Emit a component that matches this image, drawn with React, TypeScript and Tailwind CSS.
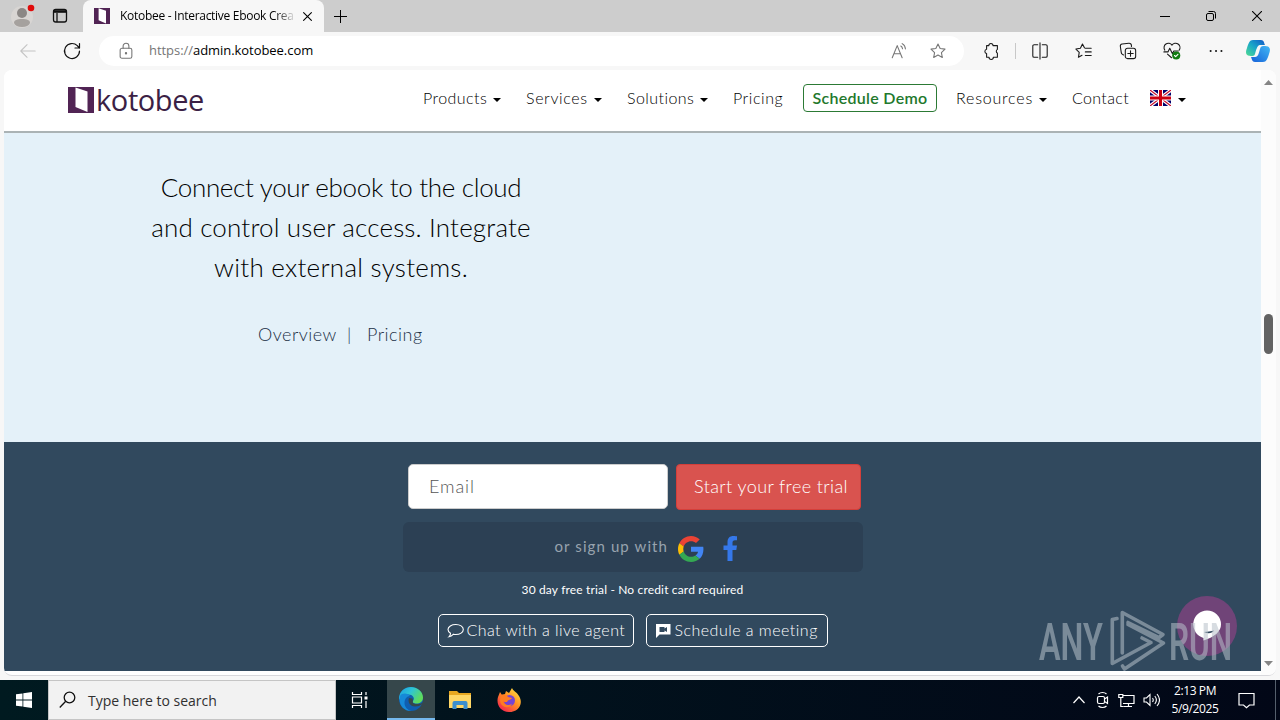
import React from 'react';

interface IconProps {
    size?: number;
    className?: string;
    children: React.ReactNode;
}

const Icon: React.FC<IconProps> = ({ size = 20, className = '', children }) => (
    <svg
        width={size}
        height={size}
        viewBox="0 0 20 20"
        fill="none"
        stroke="currentColor"
        strokeWidth="1.2"
        strokeLinecap="round"
        strokeLinejoin="round"
        className={`shrink-0 ${className}`}
    >
        {children}
    </svg>
);

const KotobeeMark: React.FC<{ size: number }> = ({ size }) => (
    <svg width={size} height={size} viewBox="0 0 26 26" className="shrink-0">
        <path d="M0 0h26v26H0z" fill="#512454" />
        <path d="M7.500 0.500 19.500 4.500v20.500L7.500 20z" fill="#fff" />
    </svg>
);

const Caret: React.FC = () => (
    <svg width="8" height="4" viewBox="0 0 8 4" className="mt-[3px] shrink-0">
        <path d="M0 0h8L4 4z" fill="#000" />
    </svg>
);

const Flag: React.FC = () => (
    <svg width="21" height="16" viewBox="0 0 21 16" className="shrink-0">
        <path d="M0 0h21v16H0z" fill="#00006b" />
        <path d="M0 0l21 16M21 0L0 16" stroke="#fff" strokeWidth="3.4" />
        <path d="M0 0l21 16M21 0L0 16" stroke="#c8102e" strokeWidth="1.2" />
        <path d="M10.5 0v16M0 8h21" stroke="#fff" strokeWidth="5" />
        <path d="M10.5 0v16M0 8h21" stroke="#cc0010" strokeWidth="3" />
    </svg>
);

const TabBar: React.FC = () => (
    <div className="flex h-8 items-stretch bg-[#cdcdcd]">
        <div className="flex w-[83px] items-center">
            <svg width="32" height="32" viewBox="0 0 32 32" className="ml-[6px]">
                <circle cx="16" cy="17" r="11" fill="#d8d5d3" />
                <circle cx="16" cy="13" r="5" fill="#8b8785" />
                <path d="M8 23c0-3 3-4 8-4s8 1 8 4c-1 2.500-4 4-8 4s-7-1.500-8-4z" fill="#a5a19e" />
                <circle cx="25" cy="8" r="3.300" fill="#e00b0b" />
            </svg>
            <svg width="16" height="16" viewBox="0 0 16 16" fill="none" stroke="#111" strokeWidth="1.300" className="ml-[14px]">
                <rect x="1.500" y="1.500" width="13" height="12.500" rx="2.200" />
                <path d="M2 3.500h12" strokeWidth="2.600" />
                <path d="M5 5v9" />
            </svg>
        </div>
        <div className="flex w-[241px] items-center rounded-t-lg bg-[#f7f7f7]">
            <div className="ml-[11px] flex">
                <KotobeeMark size={16} />
            </div>
            <div className="ml-[10px] w-[178px] bg-gradient-to-r from-black from-85% to-[#e2e2e2] to-98% bg-clip-text text-[12px] tracking-[-0.29px] whitespace-nowrap text-transparent">
                Kotobee - Interactive Ebook Crea
            </div>
            <Icon size={13} className="ml-[3px] text-black">
                <path d="M4 4l12 12M16 4L4 16" strokeWidth="1.700" />
            </Icon>
        </div>
        <div className="flex flex-1 items-center text-black">
            <svg width="13" height="13" viewBox="0 0 13 13" className="ml-[10px]" stroke="currentColor">
                <path d="M6.500 0v13M0 6.500h13" />
            </svg>
        </div>
        <div className="flex w-[138px] items-center text-black">
            <div className="flex w-[46px] justify-center">
                <svg width="10" height="10" viewBox="0 0 10 10" fill="none" stroke="currentColor"><path d="M0 5.500h10" /></svg>
            </div>
            <div className="flex w-[46px] justify-center">
                <svg width="10" height="10" viewBox="0 0 10 10" fill="none" stroke="currentColor">
                    <rect x="0.500" y="2.500" width="7" height="7" rx="1.500" />
                    <path d="M2.500 0.500H7.500a2 2 0 0 1 2 2V7.500" />
                </svg>
            </div>
            <div className="flex w-[46px] justify-center">
                <svg width="10" height="10" viewBox="0 0 10 10" stroke="currentColor" strokeWidth="1.100"><path d="M0 0l10 10M10 0L0 10" /></svg>
            </div>
        </div>
    </div>
);

const starPath = 'M10 2.200l2.400 5 5.400.7-4 3.800 1 5.500-4.800-2.700-4.800 2.700 1-5.500-4-3.800 5.400-.7z';

const Toolbar: React.FC = () => (
    <div className="flex h-[38px] items-center bg-[#f7f7f7] text-[#1a1a1a]">
        <Icon size={18} className="ml-[19px] text-[#c4c4c4]">
            <path d="M18 10H2M9 3l-7 7 7 7" />
        </Icon>
        <Icon size={20} className="ml-[25px] text-[#111]">
            <path d="M17.500 10a7.500 7.500 0 1 1-2.200-5.300L17.300 7M17.500 2.500V7H13" strokeWidth="1.200" />
        </Icon>
        <div className="ml-[17px] flex h-[30px] w-[865px] items-center rounded-full bg-white text-[#767676]">
            <Icon size={18} className="ml-[18px]">
                <rect x="3.500" y="7" width="13" height="11" rx="2" />
                <path d="M6.800 7V4.500a3.200 3.200 0 0 1 6.400 0V7" />
                <circle cx="10" cy="12.500" r="0.700" fill="currentColor" />
            </Icon>
            <div className="ml-[14px] flex-1 text-[13px] tracking-[-0.05px]">
                https://<span className="text-black">admin.kotobee.com</span>
            </div>
            <Icon size={18} className="mr-[21px]">
                <path d="M2.500 17.500L8 4l5.500 13.500M4.500 13h7M12 4.500c1.200.6 1.800 1.700 1.900 3M13.500 1.800c2.200 1.200 3.500 3.200 3.600 5.800" />
            </Icon>
            <Icon size={18} className="mr-[17px]">
                <path d={starPath} />
            </Icon>
        </div>
        <Icon size={18} className="ml-[19px]">
            <path d="M6.500 4a2.300 2.300 0 0 1 4.600 0H16v4.200a2.500 2.500 0 0 0 0 4.300V17h-4.500a2.400 2.400 0 0 1-4.800 0H4v-4.200a2.400 2.400 0 0 1 0-4.700V4z" />
        </Icon>
        <div className="ml-[14px] h-4 w-px bg-[#c8c8c8]" />
        <div className="ml-[2px] flex flex-1 items-center">
            <div className="flex w-11 justify-center">
                <Icon size={18}><path d="M7.500 3H3.500A1.500 1.500 0 0 0 2 4.500v11A1.500 1.500 0 0 0 3.500 17h4M12.500 3h4A1.500 1.500 0 0 1 18 4.500v11a1.500 1.500 0 0 1-1.500 1.500h-4M10 1v18" /></Icon>
            </div>
            <div className="flex w-11 justify-center">
                <Icon size={18}>
                    <path d="M10.500 6.500L8.300 2.200 6 7 1 7.800l3.700 3.700-.9 5.500 4-2.200M11.500 7H18M11.500 11H18M11.500 15H18" />
                </Icon>
            </div>
            <div className="flex w-11 justify-center">
                <Icon size={18}>
                    <rect x="7" y="7" width="11.500" height="11.500" rx="2.500" />
                    <path d="M12.800 9.800v6M9.800 12.800h6M5 14.500l-1.500-1a3 3 0 0 1-1-2L1.500 5a2.400 2.400 0 0 1 2-2.700l7.500-.9a2.500 2.500 0 0 1 2.800 2.200V5" />
                </Icon>
            </div>
            <div className="flex w-11 justify-center">
                <Icon size={18}>
                    <path d="M2 9a4.600 4.600 0 0 1 8-5.500A4.600 4.600 0 0 1 18 9M1 11h4.500l2-4 3 6 1.500-3h5M5 13.500l4.500 4" />
                    <circle cx="14.700" cy="15" r="4.500" fill="#107c10" stroke="none" />
                    <path d="M12.800 15l1.300 1.300 2.500-2.500" stroke="#fff" />
                </Icon>
            </div>
            <div className="flex w-11 justify-center">
                <Icon size={18}>
                    <path d="M4 10h.1M10 10h.1M16 10h.1" strokeWidth="2.200" />
                </Icon>
            </div>
            <svg width="26" height="24" viewBox="0 0 26 24" className="ml-[7px]">
                <defs>
                    <linearGradient id="cpA" x1="0" y1="1" x2="1" y2="0">
                        <stop offset="0" stopColor="#4fdc92" />
                        <stop offset=".5" stopColor="#1aa6c8" />
                        <stop offset="1" stopColor="#1257c8" />
                    </linearGradient>
                    <linearGradient id="cpB" x1="0" y1="1" x2="1" y2="0">
                        <stop offset="0" stopColor="#1560d8" />
                        <stop offset="1" stopColor="#42b8f5" />
                    </linearGradient>
                </defs>
                <path d="M8 1h8c3 0 3 3 4 5h-5c-3 0-4 6-5 9-.6 2-2 2-4 2C1 17 0 14 2 9c1.500-4.500 2.500-8 6-8z" fill="url(#cpA)" />
                <path d="M18 23h-8c-3 0-3-3-4-5h4c4 0 4-6 5.500-9.500C16.200 7 17.500 7 20 7c5 0 6 3 4 8-1.500 4.500-2.500 8-6 8z" fill="url(#cpB)" />
            </svg>
        </div>
    </div>
);

const NavBar: React.FC = () => (
    <header className="flex h-[63px] items-start border-b-2 border-[#abb3b5] bg-white text-[16px] leading-[28px] font-light text-black">
        <div className="mt-[17px] ml-[64px] flex w-[355px] items-center">
            <KotobeeMark size={26} />
            <span className="ml-[2px] font-[Open_Sans] text-[29px] leading-[26px] font-normal tracking-[-0.4px] text-[#3b1f45]">kotobee</span>
        </div>
        <nav className="mt-[14px] flex items-center whitespace-nowrap">
            <div className="flex w-[103px] items-center">
                <span className="w-[70px] tracking-[0.45px]">Products</span><Caret />
            </div>
            <div className="flex w-[101px] items-center">
                <span className="w-[68px] tracking-[0.65px]">Services</span><Caret />
            </div>
            <div className="flex w-[106px] items-center">
                <span className="w-[73px] tracking-[0.45px]">Solutions</span><Caret />
            </div>
            <div className="w-[70px] tracking-[0.55px]">Pricing</div>
            <div className="flex h-[28px] w-[134px] items-center justify-center rounded border border-[#2c7a35] font-semibold tracking-[0.3px] text-[#22782c]">
                Schedule Demo
            </div>
            <div className="ml-[19px] flex w-[116px] items-center">
                <span className="w-[83px] tracking-[0.8px]">Resources</span><Caret />
            </div>
            <div className="w-[78px] tracking-[0.35px]">Contact</div>
            <Flag />
            <div className="ml-[7px] flex"><Caret /></div>
        </nav>
    </header>
);

const GoogleLogo: React.FC = () => (
    <svg width="26" height="26" viewBox="0 0 48 48">
        <path fill="#ea4335" d="M24 9.500c3.540 0 6.710 1.220 9.210 3.600l6.850-6.850C35.900 2.380 30.470 0 24 0 14.620 0 6.510 5.380 2.560 13.220l7.980 6.190C12.430 13.720 17.740 9.500 24 9.500z" />
        <path fill="#4285f4" d="M46.980 24.550c0-1.570-.15-3.090-.38-4.550H24v9.020h12.940c-.58 2.960-2.260 5.480-4.780 7.180l7.730 6c4.510-4.180 7.090-10.360 7.090-17.650z" />
        <path fill="#fbbc05" d="M10.530 28.590c-.48-1.450-.76-2.990-.76-4.590s.27-3.140.76-4.590l-7.980-6.190C.92 16.460 0 20.120 0 24c0 3.880.92 7.540 2.560 10.780l7.970-6.190z" />
        <path fill="#34a853" d="M24 48c6.480 0 11.930-2.130 15.890-5.810l-7.730-6c-2.150 1.450-4.920 2.300-8.160 2.300-6.260 0-11.570-4.220-13.470-9.910l-7.980 6.190C6.510 42.620 14.620 48 24 48z" />
    </svg>
);

const SignUp: React.FC = () => (
    <section className="flex h-[229px] flex-col items-center bg-[#31495e] pt-[22px] text-white">
        <div className="ml-[4px] flex gap-2 font-light">
            <div className="flex h-[45px] w-[260px] items-center rounded-[5px] border border-[#ccc] bg-white pl-[20px] text-[18px] tracking-[0.9px] text-[#555]">
                Email
            </div>
            <button className="h-[46px] w-[185px] rounded border border-[#d43f3a] bg-[#d9534f] pb-[2px] pl-[5px] text-[18px] tracking-[0.4px] whitespace-nowrap">
                Start your free trial
            </button>
        </div>
        <div className="mt-[12px] flex h-[50px] w-[460px] items-center rounded-md bg-[#2c4054] pl-[152px]">
            <span className="mb-[2px] w-[123px] text-[15px] tracking-[1.1px] whitespace-nowrap text-[#98a3ae]">or sign up with</span>
            <div className="mt-[3px] flex"><GoogleLogo /></div>
            <svg width="15" height="25" viewBox="0 0 15 25" className="mt-[3px] ml-[19px]">
                <path d="M4.500 25V14H0.500V9.500h4V6.200C4.500 2 6.700 0 10.500 0c1.700 0 3.500.3 3.500.3v3.900h-2c-1.900 0-2.500 1.200-2.500 2.500v2.800H14l-.7 4.500H9.500v11z" fill="#3578ea" />
            </svg>
        </div>
        <div className="mt-[10px] text-[12px] leading-4 tracking-[0.16px]">30 day free trial - No credit card required</div>
        <div className="mt-[16px] flex gap-3 text-[16px] font-light whitespace-nowrap">
            <div className="flex h-[33px] w-[196px] items-center rounded-[5px] border border-white pl-[8px]">
                <svg width="17" height="16" viewBox="0 0 17 16" fill="none" stroke="white" strokeWidth="1.100">
                    <path d="M8.800 1.500c4.200 0 7.500 2.100 7.500 5s-3.300 5-7.500 5c-.8 0-1.600-.1-2.300-.3-1.300 1.300-2.800 2.400-4.500 2.600 1.200-1 1.500-2.200 1.500-3.500C2 9.400 1 8 1 6.500c0-2.900 3.500-5 7.800-5z" />
                </svg>
                <span className="mb-[2px] ml-[3px] tracking-[0.43px]">Chat with a live agent</span>
            </div>
            <div className="flex h-[33px] w-[182px] items-center rounded-[5px] border border-white pl-[9px]">
                <svg width="15" height="14" viewBox="0 0 15 14">
                    <path d="M0 0h14.500v10.500H3.500L0 14z" fill="#fff" />
                    <path d="M3.500 3h5v1.500l2.500-1.500v5L8.500 6.500V8h-5z" fill="#31495e" />
                </svg>
                <span className="mb-[2px] ml-[4px] tracking-[0.48px]">Schedule a meeting</span>
            </div>
        </div>
    </section>
);

const Page: React.FC = () => (
    <div className="flex h-[606px] overflow-hidden rounded-lg border-b border-[#d8d8dc] bg-white">
        <main className="w-[1257px] font-[Lato]">
            <NavBar />
            <section className="flex h-[309px] flex-col bg-[#e4f1f9] pt-[34px]">
                <div className="ml-[137px] w-[400px] text-center text-[26px] leading-[40px] font-light whitespace-nowrap text-black">
                    <p className="tracking-[-0.32px]">Connect your ebook to the cloud</p>
                    <p className="tracking-[0.17px]">and control user access. Integrate</p>
                    <p className="tracking-[0.27px]">with external systems.</p>
                </div>
                <div className="mt-[34px] ml-[254px] flex text-[18px] leading-[27px] font-light tracking-[0.5px] text-[#1c3047]">
                    <span className="w-[89px]">Overview</span>
                    <span className="w-[20px]">|</span>
                    <span>Pricing</span>
                </div>
            </section>
            <SignUp />
        </main>
        <div className="flex w-[15px] flex-col items-center bg-[#fcfcfc]">
            <svg width="9" height="5" viewBox="0 0 9 5" className="mt-[10px]"><path d="M0 5h9L4.500 0z" fill="#858585" /></svg>
            <div className="mt-[229px] h-[40px] w-[9px] rounded-full bg-[#636363]" />
            <svg width="9" height="5" viewBox="0 0 9 5" className="mt-[307px]"><path d="M0 0h9L4.500 5z" fill="#858585" /></svg>
        </div>
    </div>
);

const ChatBubble: React.FC = () => (
    <div className="absolute top-[596px] left-[1177px] flex h-[60px] w-[60px] items-center justify-center rounded-full bg-[#704478]">
        <svg width="30" height="32" viewBox="0 0 30 32">
            <path d="M15 0.500a14 14 0 0 1 14 14C29 21 23 27 11.500 30.500V28A14 14 0 0 1 15 0.500z" fill="#fff" />
            <path d="M12 22c4 2 8 1.500 10-1.500-3 .8-7 1.200-10 1.500z" fill="#31495e" />
        </svg>
    </div>
);

const Watermark: React.FC = () => (
    <svg width="204" height="72" viewBox="0 0 204 72" className="absolute top-[605px] left-[1034px]" opacity="0.55">
        <g fill="#b7c1ca" className="font-[Roboto]" fontSize="52" fontWeight="600">
            <text transform="translate(5 54.500) scale(.58 1)" textLength="110" lengthAdjust="spacingAndGlyphs">ANY</text>
            <text transform="translate(135 54.500) scale(.58 1)" textLength="109" lengthAdjust="spacingAndGlyphs">RUN</text>
        </g>
        <g fill="none" stroke="#b7c1ca" strokeWidth="3.600" strokeLinejoin="round" strokeLinecap="round">
            <path d="M88.300 48V7.500L129 29.500L125 32.500L94 17.500" />
            <path d="M83 13.500L78.300 14.500V58.500L117 37.500L108 33" />
            <path d="M88.500 61L90.500 64L129.500 38L94 19.500" />
        </g>
    </svg>
);

const Taskbar: React.FC = () => (
    <div className="flex h-10 items-stretch bg-gradient-to-r from-[#001a20] to-[#020717] text-white">
        <div className="flex w-12 items-center justify-center">
            <svg width="16" height="16" viewBox="0 0 16 16" fill="#fff">
                <path d="M0 2.300l6.500-.9v6.200H0zM7.300 1.300L16 0v7.600H7.300zM0 8.400h6.500v6.200L0 13.700zM7.300 8.400H16V16l-8.700-1.300z" />
            </svg>
        </div>
        <div className="flex w-[288px] items-center border border-[#c5c5c5] bg-[#f2f2f2] text-[#303030]">
            <svg width="18" height="18" viewBox="0 0 18 18" fill="none" stroke="#111" strokeWidth="1.300" className="ml-[10px]">
                <circle cx="10.500" cy="6.500" r="5.300" />
                <path d="M6.700 10.300L0.800 16.500" />
            </svg>
            <span className="ml-[11px] text-[14px]">Type here to search</span>
        </div>
        <div className="flex w-[51px] items-center justify-center pr-[4px]">
            <svg width="18" height="16" viewBox="0 0 18 16" fill="none" stroke="#fff" strokeWidth="1.200">
                <path d="M1.500 0v2.500h9V0M1.500 16v-2.500h9V16M1.500 5h9v6h-9zM15 0v3M15 9v7" />
                <path d="M13.500 4.500h3v3h-3z" fill="#fff" stroke="none" />
            </svg>
        </div>
        <div className="flex w-12 items-center justify-center border-b-2 border-[#76b9ed] bg-[#36474b]">
            <svg width="24" height="24" viewBox="0 0 24 24">
                <defs>
                    <linearGradient id="edgeTop" x1="0" y1="0" x2="1" y2="0.500">
                        <stop offset="0" stopColor="#1b9de2" />
                        <stop offset=".5" stopColor="#2ec4d6" />
                        <stop offset="1" stopColor="#5fdc5a" />
                    </linearGradient>
                </defs>
                <circle cx="12" cy="12" r="12" fill="#0f5eb0" />
                <path d="M0 12C0 4 6 0 12 0s12 4.500 12 10.500c0 4-3 6-6.500 6-3 0-4.500-1.500-3.500-2.500 2.500-3-.5-6.500-4.500-6.500C5 7.500 1 10 0 13z" fill="url(#edgeTop)" />
                <path d="M1 9C3 5.500 9 6 11 9c-3 0-5.500 3-5.500 7 0 4 3 7 7 8C4 24-1 17 1 9z" fill="#1689d8" />
                <path d="M10 11c-1.500 4 1 8.500 6 8.500 3 0 5-1 6.500-2l1.500 0v-2c-2 1-4 1.500-6.500 1.500-3 0-4.500-1.500-3.500-3l-.5-2.500z" fill="#36474b" />
            </svg>
        </div>
        <div className="flex w-[49px] items-center justify-center">
            <svg width="22" height="20" viewBox="0 0 22 20">
                <path d="M0 1h8l2 2h12v15H0z" fill="#e8a821" />
                <path d="M0 5h22v13H0z" fill="#ffd766" />
                <path d="M3.500 19v-6a2 2 0 0 1 2-2h11a2 2 0 0 1 2 2v6h-4v-4h-7v4z" fill="#3c8fce" />
            </svg>
        </div>
        <div className="flex flex-1 items-center">
            <svg width="24" height="24" viewBox="0 0 24 24" className="ml-[13px]">
                <defs>
                    <linearGradient id="foxFire" x1="1" y1="0" x2="0.200" y2="1">
                        <stop offset="0" stopColor="#fff04a" />
                        <stop offset=".5" stopColor="#ff9022" />
                        <stop offset="1" stopColor="#f5214f" />
                    </linearGradient>
                </defs>
                <path d="M3 4l2 3 3-1 1-3 3 2 3-5c1 3 5 4 7 8 5 8-1 16-10 16S-1 16 1 9z" fill="url(#foxFire)" />
                <circle cx="12.500" cy="12.500" r="5.500" fill="#7544d3" />
                <path d="M4 7c3-1 6 0 7 2l4 1c-1 2-4 1.500-5 4-2 0-3 0-4-1 1 4 5 5 9 3-3 6-12 3-12-4z" fill="#ff7d22" />
            </svg>
        </div>
        <div className="flex w-[104px] items-center gap-[8px] pl-[14px]">
            <svg width="12" height="8" viewBox="0 0 12 8" fill="none" stroke="#fff" strokeWidth="1.200" className="-ml-[3px] mr-[3px]"><path d="M0.500 7L6 1l5.500 6" /></svg>
            <svg width="14" height="18" viewBox="0 0 14 18" fill="none" stroke="#fff" strokeWidth="1.200">
                <rect x="1.500" y="5.500" width="7" height="7" rx="1.500" />
                <path d="M8.500 8l3-2v6.500l-3-2M2.500 3c2-2 6-2 8 0M2.500 15c2 2 6 2 8 0" />
            </svg>
            <svg width="17" height="15" viewBox="0 0 17 15" fill="none" stroke="#fff" strokeWidth="1.200">
                <path d="M5 2.500h11v8H5M10.500 10.500V13.500M6 13.500h8M0.800 1.500h4v3h-4zM2.800 4.500v9h3" />
            </svg>
            <svg width="17" height="14" viewBox="0 0 17 14" fill="none" stroke="#fff" strokeWidth="1.100">
                <path d="M1 5h2.500L7 1.500v11L3.500 9H1zM9.500 5q1.500 2 0 4M11.800 3q3.200 4 0 8M14 1q5 6 0 12" />
            </svg>
        </div>
        <div className="flex w-[58px] flex-col items-center justify-center text-[12px] leading-[18px] tracking-[-0.4px] whitespace-nowrap">
            <div>2:13 PM</div>
            <div>5/9/2025</div>
        </div>
        <div className="flex w-[52px] items-center justify-center border-r border-[#555f6c] pr-[6px]">
            <svg width="17" height="17" viewBox="0 0 17 17" fill="none" stroke="#fff" strokeWidth="1.200">
                <path d="M1 1.500h15v11.500h-4.500l-3 2.800-3-2.800H1z" />
            </svg>
        </div>
        <div className="w-[4px]" />
    </div>
);

const App: React.FC = () => {
    return (
        <div className="relative h-[720px] w-[1280px] overflow-hidden bg-[#f7f7f7] font-[Open_Sans,sans-serif]">
            <TabBar />
            <Toolbar />
            <div className="h-[610px] px-1">
                <Page />
            </div>
            <Taskbar />
            <ChatBubble />
            <Watermark />
        </div>
    );
};

export default App;
